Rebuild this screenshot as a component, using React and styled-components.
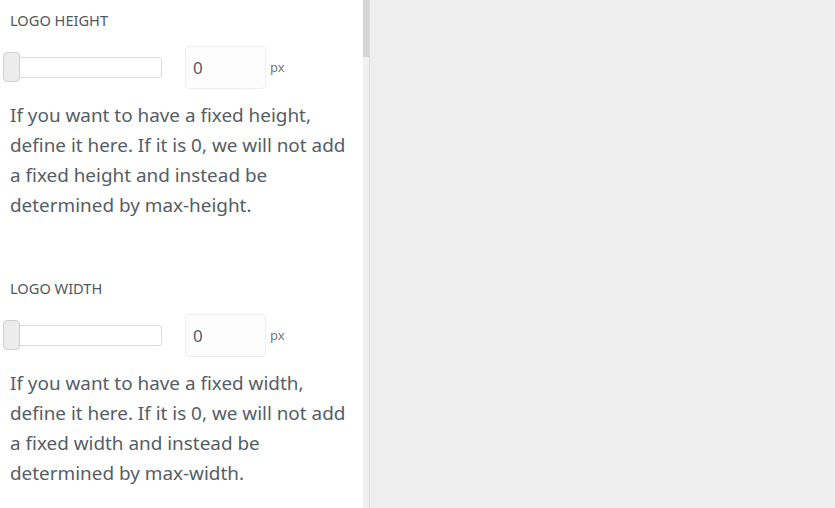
import React from "react";
import styled, { createGlobalStyle } from "styled-components";

const Global = createGlobalStyle`
  html, body { margin: 0; padding: 0; }
  body { font-family: "Noto Sans", "Open Sans", sans-serif; background: #efefef; }
`;

const Page = styled.div`
  display: flex;
  width: 835px;
  height: 508px;
  overflow: hidden;
`;

const Panel = styled.div`
  width: 363px;
  height: 508px;
  background: #fff;
  padding: 0 10px;
  box-sizing: border-box;
  overflow: hidden;
`;

const ScrollTrack = styled.div`
  width: 6px;
  height: 508px;
  background: #f0f0f0;
  display: flex;
  flex-direction: column;
`;

const ScrollThumb = styled.div`
  height: 57px;
  background: #d6d6d6;
`;

const Divider = styled.div`
  width: 1px;
  background: #dcdcdc;
`;

const Rest = styled.div`
  flex: 1;
  background: #efefef;
`;

const Section = styled.section`
  padding-top: 10px;
  margin-bottom: 48px;
`;

const Label = styled.div`
  font-size: 14.6px;
  line-height: 20px;
  color: #50575e;
  text-transform: uppercase;
`;

const Row = styled.div`
  display: flex;
  align-items: center;
  margin-top: 16px;
  height: 43px;
`;

const Slider = styled.div`
  position: relative;
  width: 159px;
  height: 43px;
  margin-left: -7px;
  display: flex;
  align-items: center;
`;

const Track = styled.div`
  margin-left: 1px;
  width: 158px;
  height: 21px;
  box-sizing: border-box;
  border: 1px solid #dcdcdc;
  border-radius: 3px;
  background: #fff;
`;

const Thumb = styled.div`
  position: absolute;
  left: 0;
  top: 6px;
  width: 17px;
  height: 30px;
  box-sizing: border-box;
  border: 1px solid #cfcfcf;
  border-radius: 4px;
  background: #ececec;
`;

const NumberBox = styled.div`
  margin-left: 23px;
  width: 81px;
  height: 43px;
  box-sizing: border-box;
  border: 1px solid #eeeeee;
  border-radius: 4px;
  background: #fdfdfd;
  display: flex;
  align-items: center;
  padding-left: 7px;
  font-size: 17px;
  color: #555d66;
`;

const Unit = styled.span`
  margin-left: 4px;
  align-self: flex-start;
  margin-top: 12px;
  font-size: 13px;
  color: #777;
`;

const Help = styled.p`
  margin: 11px 0 0;
  font-size: 18.9px;
  line-height: 30px;
  color: #555d66;
`;

const Field = ({ label, text }) => (
  <Section>
    <Label>{label}</Label>
    <Row>
      <Slider>
        <Track />
        <Thumb />
      </Slider>
      <NumberBox>0</NumberBox>
      <Unit>px</Unit>
    </Row>
    <Help>{text}</Help>
  </Section>
);

export default function App() {
  return (
    <>
      <Global />
      <Page>
        <Panel>
          <Field
            label="Logo Height"
            text="If you want to have a fixed height, define it here. If it is 0, we will not add a fixed height and instead be determined by max-height."
          />
          <Field
            label="Logo Width"
            text="If you want to have a fixed width, define it here. If it is 0, we will not add a fixed width and instead be determined by max-width."
          />
        </Panel>
        <ScrollTrack>
          <ScrollThumb />
        </ScrollTrack>
        <Divider />
        <Rest />
      </Page>
    </>
  );
}
